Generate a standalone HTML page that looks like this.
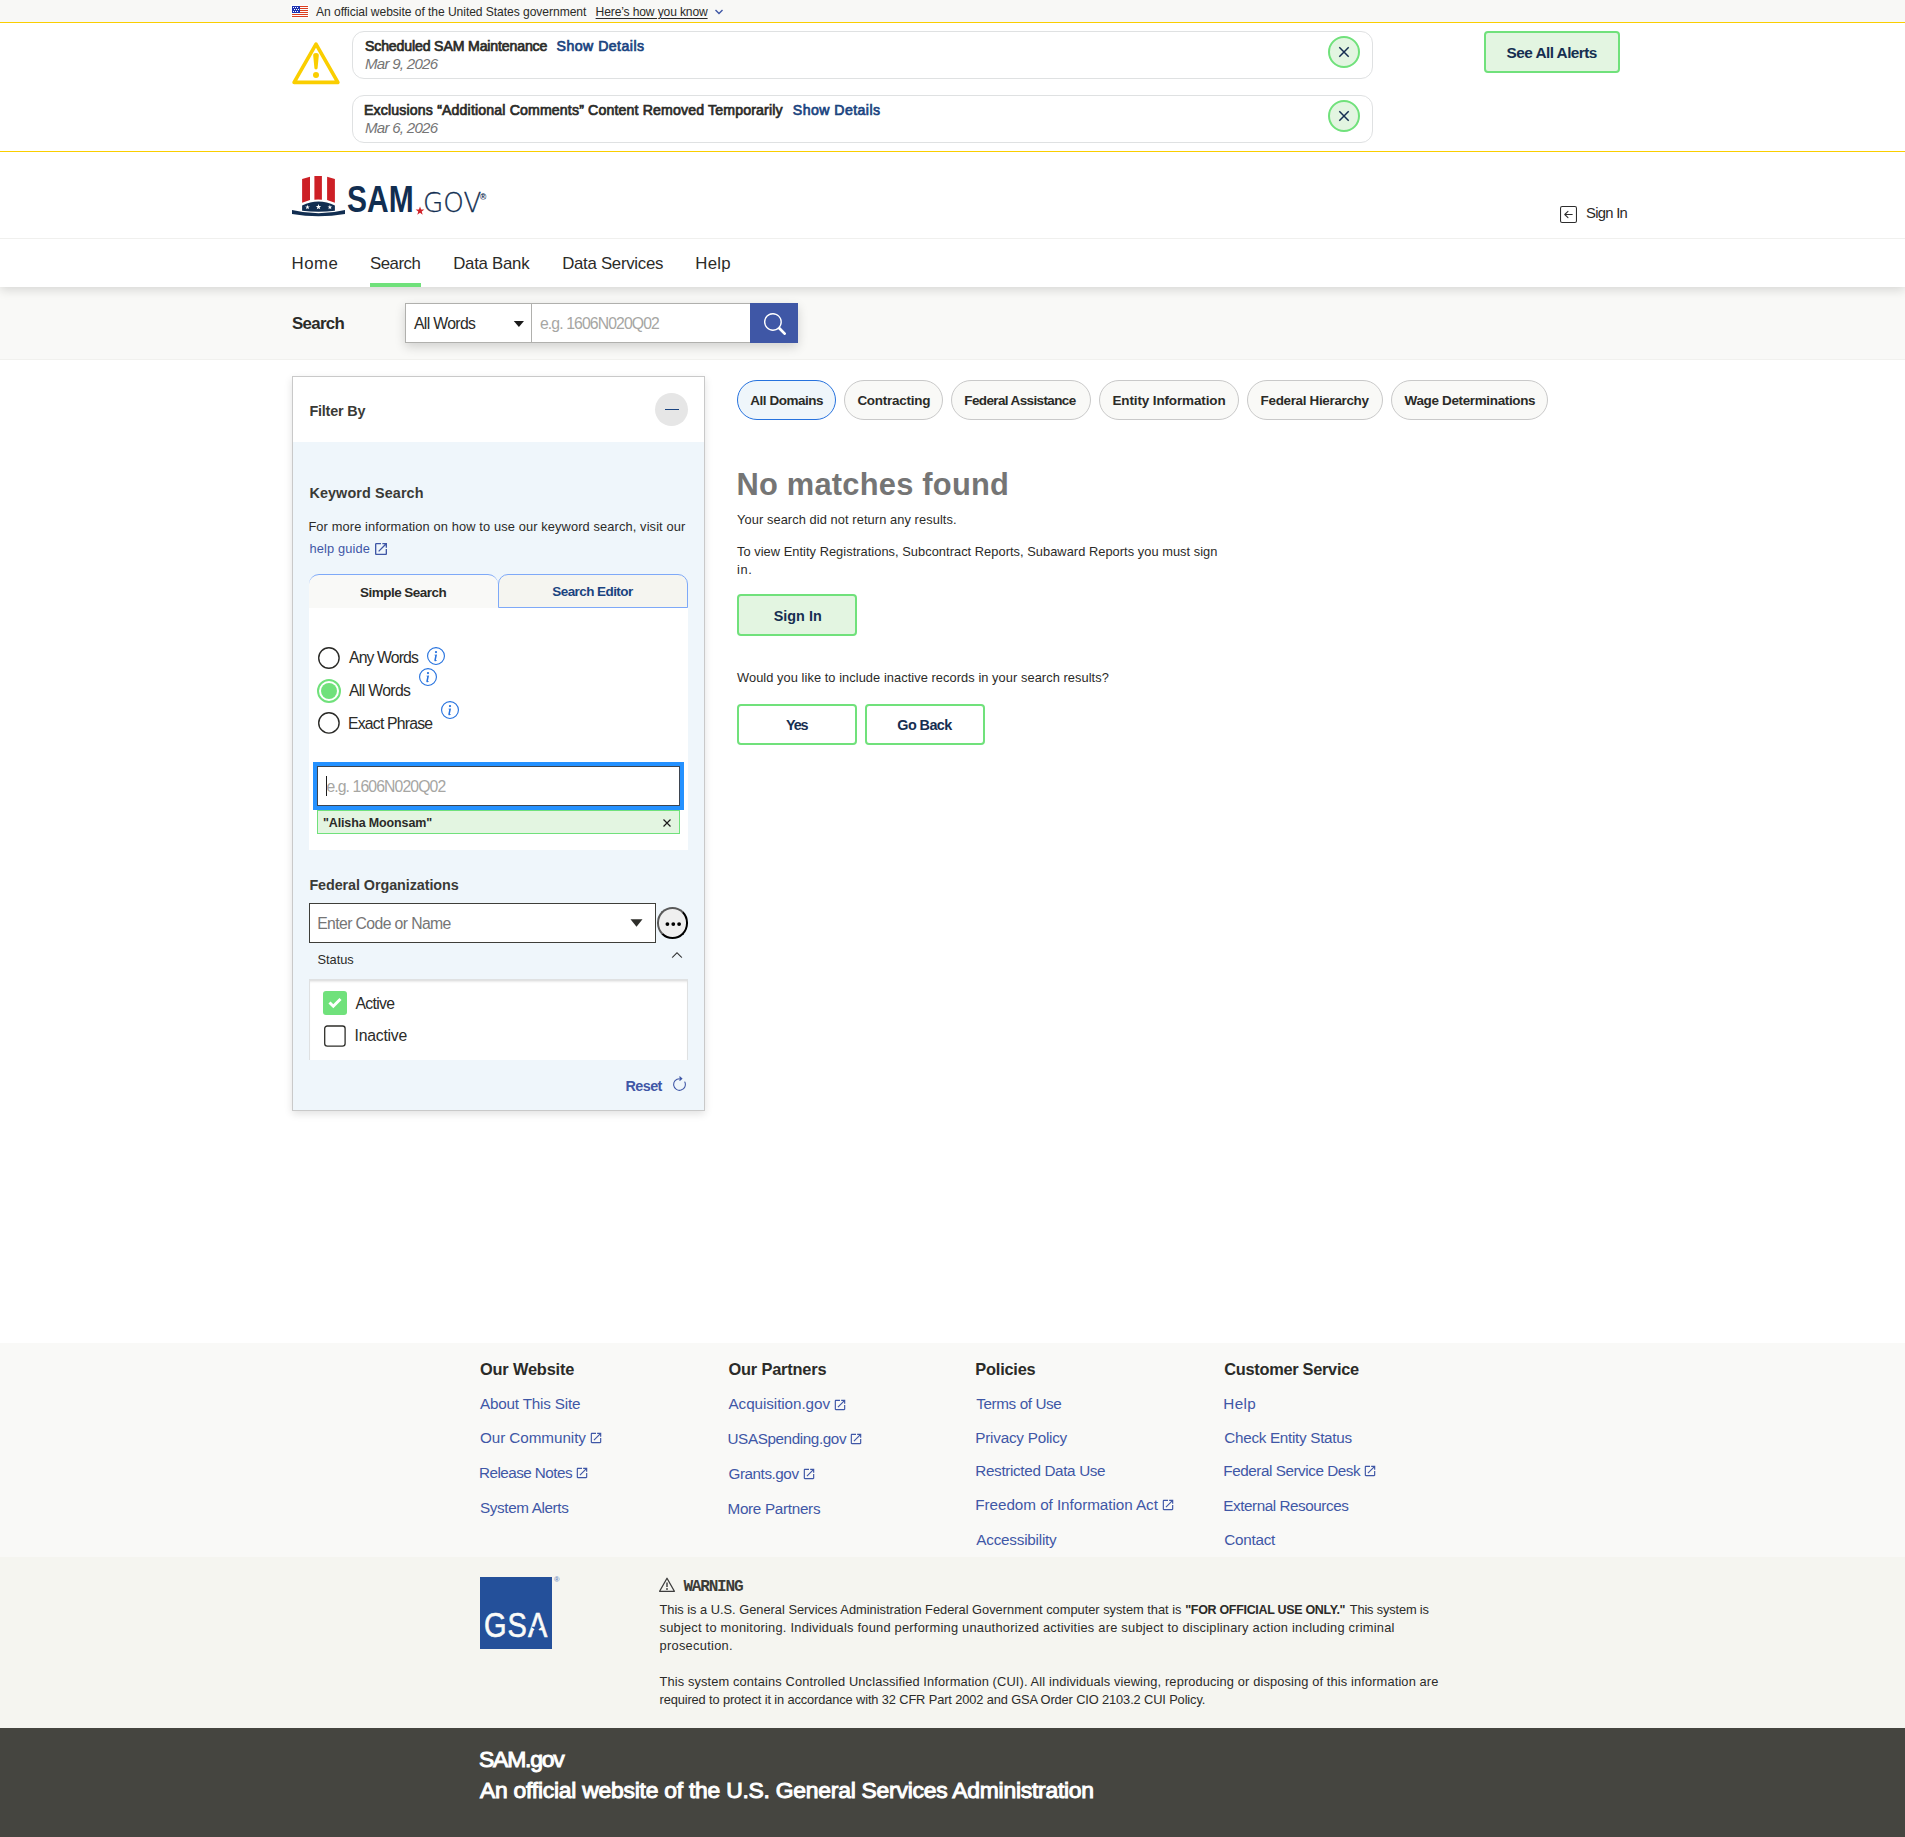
<!DOCTYPE html>
<html lang="en"><head><meta charset="utf-8"><title>SAM.gov | Search</title>
<style>
html,body{margin:0;padding:0}
body{width:1905px;height:1837px;position:relative;overflow:hidden;background:#fff;font-family:"Liberation Sans",sans-serif;-webkit-font-smoothing:antialiased}
.r{position:absolute;box-sizing:content-box;display:block}
.t{position:absolute;white-space:pre;line-height:1;margin:0;padding:0}
</style></head><body>
<!-- ===== backgrounds ===== -->
<div class="r" style="left:0;top:0;width:1905px;height:22px;background:#f8f8f6"></div>
<div class="r" style="left:0;top:22px;width:1905px;height:1px;background:#face00"></div>
<div class="r" style="left:0;top:151px;width:1905px;height:1px;background:#face00"></div>
<div class="r" style="left:0;top:238px;width:1905px;height:1px;background:#f0f0ee"></div>
<!-- search strip -->
<div class="r" style="left:0;top:287px;width:1905px;height:72px;background:#f9f9f7;border-bottom:1px solid #f1f1ee"></div>
<div class="r" style="left:0;top:239px;width:1905px;height:48px;background:#fff;box-shadow:0 3px 10px rgba(0,0,0,.14);clip-path:inset(0 0 -30px 0)"></div>
<!-- nav underline -->
<div class="r" style="left:370px;top:283px;width:51px;height:4px;background:#70e17b"></div>

<!-- ===== gov banner ===== -->
<svg class="r" style="left:291px;top:5px" width="18" height="13" viewBox="-1 -1 18 13" shape-rendering="crispEdges">
<rect x="-1" y="-1" width="18" height="13" fill="#fdfdfd"/>
<g fill="#db3e1f"><rect y="0" width="16" height="1"/><rect y="2" width="16" height="1"/><rect y="4" width="16" height="1"/><rect y="6" width="16" height="1"/><rect y="8" width="16" height="1"/><rect y="10" width="16" height="1"/></g>
<rect width="8" height="7" fill="#1e33b1"/>
<g fill="#fff"><rect x="1" y="1" width="1" height="1"/><rect x="3" y="1" width="1" height="1"/><rect x="5" y="1" width="1" height="1"/><rect x="2" y="3" width="1" height="1"/><rect x="4" y="3" width="1" height="1"/><rect x="6" y="3" width="1" height="1"/><rect x="1" y="5" width="1" height="1"/><rect x="3" y="5" width="1" height="1"/><rect x="5" y="5" width="1" height="1"/></g>
</svg>
<svg class="r" style="left:714px;top:8px" width="10" height="8" viewBox="0 0 10 8"><path d="M1.5 2 L5 5.5 L8.5 2" fill="none" stroke="#3f57a6" stroke-width="1.4"/></svg>

<!-- ===== alerts ===== -->
<svg class="r" style="left:288px;top:38px" width="56" height="50" viewBox="288 38 56 50">
<path d="M316 44.1 L337.9 82.4 L294.1 82.4 Z" fill="none" stroke="#face00" stroke-width="3.6" stroke-linejoin="round"/>
<path d="M313.2 55.5 a2.8 2.4 0 0 1 5.6 0 L317.6 68 a1.6 1.4 0 0 1 -3.2 0 Z" fill="#face00"/>
<circle cx="316" cy="75" r="3" fill="#face00"/>
</svg>
<div class="r" style="left:352px;top:31px;width:1019px;height:46px;border:1px solid #dfe1e2;border-radius:12px;background:#fff"></div>
<div class="r" style="left:352px;top:95px;width:1019px;height:46px;border:1px solid #dfe1e2;border-radius:12px;background:#fff"></div>
<div class="r" style="left:1328px;top:36px;width:28px;height:28px;border:2px solid #70e17b;border-radius:50%;background:#e3f5e1"></div>
<div class="r" style="left:1328px;top:100px;width:28px;height:28px;border:2px solid #70e17b;border-radius:50%;background:#e3f5e1"></div>
<svg class="r" style="left:1336px;top:44px" width="16" height="16" viewBox="0 0 16 16"><path d="M3.3 3.3 L12.7 12.7 M12.7 3.3 L3.3 12.7" stroke="#162e51" stroke-width="1.5" fill="none"/></svg>
<svg class="r" style="left:1336px;top:108px" width="16" height="16" viewBox="0 0 16 16"><path d="M3.3 3.3 L12.7 12.7 M12.7 3.3 L3.3 12.7" stroke="#162e51" stroke-width="1.5" fill="none"/></svg>
<div class="r" style="left:1484px;top:31px;width:132px;height:38px;border:2px solid #70e17b;border-radius:4px;background:#e3f5e1"></div>

<!-- ===== header: logo ===== -->
<svg class="r" style="left:290px;top:174px" width="60" height="44" viewBox="290 174 60 44">
<path d="M302.1 179 L310 176.8 L310 200 L302.1 202.7 Z" fill="#cd2026"/>
<path d="M314.4 176 L321.9 176 L321.9 199.7 Q318.2 199.3 314.4 199.7 Z" fill="#cd2026"/>
<path d="M327.1 176.8 L334.9 179 L334.9 202.7 L327.1 200 Z" fill="#cd2026"/>
<path d="M302.1 205.6 Q318.5 197.4 334.9 205.6 L334.9 210.8 Q318.5 212.6 302.1 210.8 Z" fill="#112e51"/>
<path d="M292 209.9 Q318.5 216.4 345 209.9 L345 214 Q318.5 218.6 292 214 Z" fill="#112e51"/>
<g fill="#fff"><path d="M0 -2.9 L0.68 -0.9 L2.76 -0.9 L1.1 0.34 L1.7 2.35 L0 1.15 L-1.7 2.35 L-1.1 0.34 L-2.76 -0.9 L-0.68 -0.9 Z" transform="translate(307.5 207.2) scale(.85)"/><path d="M0 -2.9 L0.68 -0.9 L2.76 -0.9 L1.1 0.34 L1.7 2.35 L0 1.15 L-1.7 2.35 L-1.1 0.34 L-2.76 -0.9 L-0.68 -0.9 Z" transform="translate(318.5 207)"/><path d="M0 -2.9 L0.68 -0.9 L2.76 -0.9 L1.1 0.34 L1.7 2.35 L0 1.15 L-1.7 2.35 L-1.1 0.34 L-2.76 -0.9 L-0.68 -0.9 Z" transform="translate(329.9 207.2) scale(.85)"/></g>
</svg>
<svg class="r" style="left:414px;top:205px" width="12" height="12" viewBox="-6 -6 12 12"><path d="M0 -4.6 L1.1 -1.45 L4.4 -1.4 L1.75 0.6 L2.7 3.75 L0 1.85 L-2.7 3.75 L-1.75 0.6 L-4.4 -1.4 L-1.1 -1.45 Z" fill="#d12229"/></svg>
<svg class="r" style="left:1560px;top:206px" width="17" height="17" viewBox="0 0 16 16"><path fill="#2d2d2d" fill-rule="evenodd" d="M15 2a1 1 0 0 0-1-1H2a1 1 0 0 0-1 1v12a1 1 0 0 0 1 1h12a1 1 0 0 0 1-1V2zM0 2a2 2 0 0 1 2-2h12a2 2 0 0 1 2 2v12a2 2 0 0 1-2 2H2a2 2 0 0 1-2-2V2zm11.5 5.5a.5.5 0 0 1 0 1H5.707l2.147 2.146a.5.5 0 0 1-.708.708l-3-3a.5.5 0 0 1 0-.708l3-3a.5.5 0 1 1 .708.708L5.707 7.5H11.5z"/></svg>

<!-- ===== search group ===== -->
<div class="r" style="left:405px;top:303px;width:393px;height:40px;box-shadow:0 4px 10px rgba(0,0,0,.16)"></div>
<div class="r" style="left:405px;top:303px;width:125px;height:38px;border:1px solid #b0b0ad;border-right:none;background:#fff"></div>
<div class="r" style="left:531px;top:303px;width:218px;height:38px;border:1px solid #b0b0ad;border-right:none;background:#fff"></div>
<div class="r" style="left:750px;top:303px;width:48px;height:40px;background:#3f57a6"></div>
<svg class="r" style="left:513px;top:320px" width="12" height="8" viewBox="0 0 12 8"><path d="M0.8 1 L11 1 L5.9 7 Z" fill="#1b1b1b"/></svg>
<svg class="r" style="left:763.7px;top:312.5px" width="22" height="22" viewBox="0 0 16 16"><path fill="#fff" d="M11.742 10.344a6.5 6.5 0 1 0-1.397 1.398h-.001c.03.04.062.078.098.115l3.85 3.85a1 1 0 0 0 1.415-1.414l-3.85-3.85a1.007 1.007 0 0 0-.115-.1zM12 6.5a5.5 5.5 0 1 1-11 0 5.5 5.5 0 0 1 11 0z"/></svg>

<!-- ===== filter panel ===== -->
<div class="r" style="left:292px;top:376px;width:411px;height:733px;border:1px solid #c9c9c9;background:#eff6fb;box-shadow:0 3px 8px rgba(0,0,0,.12)"></div>
<div class="r" style="left:293px;top:377px;width:411px;height:65px;background:#fff"></div>
<div class="r" style="left:655px;top:393px;width:33px;height:33px;border-radius:50%;background:#e6e6e6"></div>
<div class="r" style="left:664.5px;top:408.5px;width:14.5px;height:1.5px;background:#1a4480"></div>
<!-- ext icon help guide -->
<svg class="r" style="left:373px;top:541px" width="16" height="16" viewBox="0 0 24 24"><path fill="#3f57a6" d="M19 19H5V5h7V3H5c-1.11 0-2 .9-2 2v14c0 1.1.89 2 2 2h14c1.1 0 2-.9 2-2v-7h-2v7zM14 3v2h3.590l-9.830 9.830 1.410 1.410L19 6.410V10h2V3h-7z"/></svg>
<!-- tabs -->
<div class="r" style="left:309px;top:574px;width:189px;height:33px;border:0 solid #7ea9f8;border-top-width:1px;border-radius:10px 10px 0 0;background:#f9f9f7"></div>
<div class="r" style="left:498px;top:574px;width:188px;height:32px;border:1px solid #7ea9f8;border-radius:10px 10px 0 0;background:#f5f5f0"></div>
<div class="r" style="left:309px;top:608px;width:379px;height:242px;background:#fff"></div>
<!-- radios -->
<svg class="r" style="left:316px;top:645px" width="26" height="26" viewBox="0 0 26 26"><circle cx="12.9" cy="13" r="10.2" fill="#fff" stroke="#2a2a27" stroke-width="1.4"/></svg>
<div class="r" style="left:317px;top:679px;width:20px;height:20px;border:2px solid #70e17b;border-radius:50%;background:#fff"></div>
<div class="r" style="left:321px;top:683px;width:16px;height:16px;border-radius:50%;background:#70e17b"></div>
<svg class="r" style="left:316px;top:710px" width="26" height="26" viewBox="0 0 26 26"><circle cx="12.9" cy="12.9" r="10.2" fill="#fff" stroke="#2a2a27" stroke-width="1.4"/></svg>
<!-- info icons -->
<svg class="r" style="left:427.2px;top:647px" width="18" height="18" viewBox="0 0 16 16" fill="#2672de"><path d="M8 15A7 7 0 1 1 8 1a7 7 0 0 1 0 14zm0 1A8 8 0 1 0 8 0a8 8 0 0 0 0 16z"/><path d="m8.930 6.588-2.290.287-.082.380.450.083c.294.070.352.176.288.469l-.738 3.468c-.194.897.105 1.319.808 1.319.545 0 1.178-.252 1.465-.598l.088-.416c-.200.176-.492.246-.686.246-.275 0-.375-.193-.304-.533L8.930 6.588zM9 4.500a1 1 0 1 1-2 0 1 1 0 0 1 2 0z"/></svg>
<svg class="r" style="left:419.2px;top:668px" width="18" height="18" viewBox="0 0 16 16" fill="#2672de"><path d="M8 15A7 7 0 1 1 8 1a7 7 0 0 1 0 14zm0 1A8 8 0 1 0 8 0a8 8 0 0 0 0 16z"/><path d="m8.930 6.588-2.290.287-.082.380.450.083c.294.070.352.176.288.469l-.738 3.468c-.194.897.105 1.319.808 1.319.545 0 1.178-.252 1.465-.598l.088-.416c-.200.176-.492.246-.686.246-.275 0-.375-.193-.304-.533L8.930 6.588zM9 4.500a1 1 0 1 1-2 0 1 1 0 0 1 2 0z"/></svg>
<svg class="r" style="left:441.3px;top:701px" width="18" height="18" viewBox="0 0 16 16" fill="#2672de"><path d="M8 15A7 7 0 1 1 8 1a7 7 0 0 1 0 14zm0 1A8 8 0 1 0 8 0a8 8 0 0 0 0 16z"/><path d="m8.930 6.588-2.290.287-.082.380.450.083c.294.070.352.176.288.469l-.738 3.468c-.194.897.105 1.319.808 1.319.545 0 1.178-.252 1.465-.598l.088-.416c-.200.176-.492.246-.686.246-.275 0-.375-.193-.304-.533L8.930 6.588zM9 4.500a1 1 0 1 1-2 0 1 1 0 0 1 2 0z"/></svg>
<!-- focused input -->
<div class="r" style="left:313px;top:762px;width:371px;height:48px;background:#2491ff"></div>
<div class="r" style="left:317px;top:766px;width:361px;height:38px;border:1px solid #3d4551;background:#fff"></div>
<div class="r" style="left:326px;top:776px;width:1px;height:20px;background:#1b1b1b"></div>
<!-- chip -->
<div class="r" style="left:317px;top:810px;width:361px;height:21.5px;border:1px solid #70e17b;background:#e3f5e1"></div>
<svg class="r" style="left:662px;top:818px" width="10" height="10" viewBox="0 0 10 10"><path d="M1.5 1.5 L8.5 8.5 M8.5 1.5 L1.5 8.5" stroke="#1b1b1b" stroke-width="1.2" fill="none"/></svg>
<!-- fed org -->
<div class="r" style="left:309px;top:903px;width:345px;height:38px;border:1px solid #3e3e39;background:#fff"></div>
<svg class="r" style="left:629.5px;top:919px" width="13" height="9" viewBox="0 0 13 9"><path d="M0.5 0.3 L12.5 0.3 L6.5 7.8 Z" fill="#2e2e2a"/></svg>
<div class="r" style="left:656.5px;top:907px;width:27.5px;height:28px;border:2px solid;border-color:#5a5a5a #000 #000 #5a5a5a;border-radius:50%;background:#efefef"></div>
<svg class="r" style="left:663px;top:919px" width="20" height="10" viewBox="0 0 20 10"><circle cx="4.4" cy="5.1" r="1.9" fill="#000"/><circle cx="10.3" cy="5.1" r="1.9" fill="#000"/><circle cx="16.1" cy="5.1" r="1.9" fill="#000"/></svg>
<!-- status -->
<svg class="r" style="left:670.6px;top:949.1px" width="12" height="12" viewBox="0 0 16 16"><path fill="#1b1b1b" stroke="#1b1b1b" stroke-width=".4" fill-rule="evenodd" d="M7.646 4.646a.5.5 0 0 1 .708 0l6 6a.5.5 0 0 1-.708.708L8 5.707l-5.646 5.647a.5.5 0 0 1-.708-.708l6-6z"/></svg>
<div class="r" style="left:309px;top:979px;width:377px;height:80px;border:1px solid #dfe1e2;border-bottom:none;background:#fff;box-shadow:inset 0 3px 3px -2px rgba(0,0,0,.18)"></div>
<div class="r" style="left:323px;top:991px;width:24px;height:24px;border-radius:3px;background:#70e17b"></div>
<svg class="r" style="left:323px;top:991px" width="24" height="24" viewBox="0 0 24 24"><path d="M6.5 11.5 L10.3 15.2 L17.5 8" stroke="#fff" stroke-width="3" fill="none"/></svg>
<svg class="r" style="left:322px;top:1023px" width="26" height="26" viewBox="0 0 26 26"><rect x="2.7" y="3" width="20.4" height="20.1" rx="2.6" fill="#fff" stroke="#2e2e2a" stroke-width="1.3"/></svg>
<svg class="r" style="left:670.9px;top:1076.3px" width="17" height="17" viewBox="0 0 16 16" fill="#3f57a6"><path fill-rule="evenodd" d="M8 3a5 5 0 1 0 4.546 2.914.5.5 0 0 1 .908-.417A6 6 0 1 1 8 2v1z"/><path d="M8 4.466V.534a.25.25 0 0 1 .41-.192l2.36 1.966c.12.1.12.284 0 .384L8.410 4.658A.25.25 0 0 1 8 4.466z"/></svg>

<!-- ===== pills ===== -->
<div class="r" style="left:737px;top:380px;width:97px;height:38px;border:1px solid #2672de;border-radius:20px;background:#eff6fb"></div>
<div class="r" style="left:844px;top:380px;width:97px;height:38px;border:1px solid #c9c9c9;border-radius:20px;background:#f9f9f7"></div>
<div class="r" style="left:951px;top:380px;width:138px;height:38px;border:1px solid #c9c9c9;border-radius:20px;background:#f9f9f7"></div>
<div class="r" style="left:1099px;top:380px;width:138px;height:38px;border:1px solid #c9c9c9;border-radius:20px;background:#f9f9f7"></div>
<div class="r" style="left:1247px;top:380px;width:134px;height:38px;border:1px solid #c9c9c9;border-radius:20px;background:#f9f9f7"></div>
<div class="r" style="left:1391px;top:380px;width:155px;height:38px;border:1px solid #c9c9c9;border-radius:20px;background:#f9f9f7"></div>
<!-- buttons -->
<div class="r" style="left:737px;top:594px;width:116px;height:38px;border:2px solid #70e17b;border-radius:4px;background:#e3f5e1"></div>
<div class="r" style="left:737px;top:704px;width:116px;height:37px;border:2px solid #70e17b;border-radius:4px;background:#fff"></div>
<div class="r" style="left:865px;top:704px;width:116px;height:37px;border:2px solid #70e17b;border-radius:4px;background:#fff"></div>

<!-- ===== footer ===== -->
<div class="r" style="left:0;top:1343px;width:1905px;height:214px;background:#f9f9f7"></div>
<div class="r" style="left:0;top:1557px;width:1905px;height:171px;background:#f5f5f0"></div>
<div class="r" style="left:0;top:1728px;width:1905px;height:109px;background:#454540"></div>
<div class="r" style="left:480px;top:1577px;width:72px;height:72px;background:#24509a"></div>
<svg class="r" style="left:658px;top:1576px" width="18" height="17" viewBox="0 0 18 17"><path d="M9 2.2 L16.4 15.3 L1.6 15.3 Z" fill="none" stroke="#3d3d3d" stroke-width="1.3" stroke-linejoin="round"/><path d="M9 6.6 L9 11" stroke="#3d3d3d" stroke-width="1.4"/><circle cx="9" cy="13" r="0.9" fill="#3d3d3d"/></svg>
<!-- footer ext icons -->
<svg class="r" style="left:588.5px;top:1431.2px" width="14" height="14" viewBox="0 0 24 24"><path fill="#3f57a6" d="M19 19H5V5h7V3H5c-1.11 0-2 .9-2 2v14c0 1.1.89 2 2 2h14c1.1 0 2-.9 2-2v-7h-2v7zM14 3v2h3.590l-9.830 9.830 1.410 1.410L19 6.410V10h2V3h-7z"/></svg>
<svg class="r" style="left:574.5px;top:1466.0px" width="14" height="14" viewBox="0 0 24 24"><path fill="#3f57a6" d="M19 19H5V5h7V3H5c-1.11 0-2 .9-2 2v14c0 1.1.89 2 2 2h14c1.1 0 2-.9 2-2v-7h-2v7zM14 3v2h3.590l-9.830 9.830 1.410 1.410L19 6.410V10h2V3h-7z"/></svg>
<svg class="r" style="left:832.5px;top:1397.5px" width="14" height="14" viewBox="0 0 24 24"><path fill="#3f57a6" d="M19 19H5V5h7V3H5c-1.11 0-2 .9-2 2v14c0 1.1.89 2 2 2h14c1.1 0 2-.9 2-2v-7h-2v7zM14 3v2h3.590l-9.830 9.830 1.410 1.410L19 6.410V10h2V3h-7z"/></svg>
<svg class="r" style="left:848.9px;top:1432.4px" width="14" height="14" viewBox="0 0 24 24"><path fill="#3f57a6" d="M19 19H5V5h7V3H5c-1.11 0-2 .9-2 2v14c0 1.1.89 2 2 2h14c1.1 0 2-.9 2-2v-7h-2v7zM14 3v2h3.590l-9.830 9.830 1.410 1.410L19 6.410V10h2V3h-7z"/></svg>
<svg class="r" style="left:801.5px;top:1467.2px" width="14" height="14" viewBox="0 0 24 24"><path fill="#3f57a6" d="M19 19H5V5h7V3H5c-1.11 0-2 .9-2 2v14c0 1.1.89 2 2 2h14c1.1 0 2-.9 2-2v-7h-2v7zM14 3v2h3.590l-9.830 9.830 1.410 1.410L19 6.410V10h2V3h-7z"/></svg>
<svg class="r" style="left:1161.2px;top:1498.2px" width="14" height="14" viewBox="0 0 24 24"><path fill="#3f57a6" d="M19 19H5V5h7V3H5c-1.11 0-2 .9-2 2v14c0 1.1.89 2 2 2h14c1.1 0 2-.9 2-2v-7h-2v7zM14 3v2h3.590l-9.830 9.830 1.410 1.410L19 6.410V10h2V3h-7z"/></svg>
<svg class="r" style="left:1363.0px;top:1464.0px" width="14" height="14" viewBox="0 0 24 24"><path fill="#3f57a6" d="M19 19H5V5h7V3H5c-1.11 0-2 .9-2 2v14c0 1.1.89 2 2 2h14c1.1 0 2-.9 2-2v-7h-2v7zM14 3v2h3.590l-9.830 9.830 1.410 1.410L19 6.410V10h2V3h-7z"/></svg>

<!-- ===== text ===== -->
<span class="t" id="t0" style="left:316.00px;top:5.6px;font-size:12.09px;font-weight:400;color:#2b2b28;letter-spacing:-0.054px;">An official website of the United States government</span>
<span class="t" id="t1" style="left:595.60px;top:5.6px;font-size:12.09px;font-weight:400;color:#2b2b28;letter-spacing:-0.136px;text-decoration:underline;text-underline-offset:2px">Here&rsquo;s how you know</span>
<span class="t" id="t2" style="left:365.00px;top:39.1px;font-size:14.14px;font-weight:400;color:#2b2b28;letter-spacing:-0.156px;-webkit-text-stroke:.7px #2b2b28">Scheduled SAM Maintenance</span>
<span class="t" id="t3" style="left:556.60px;top:39.1px;font-size:14.14px;font-weight:400;color:#1a4480;letter-spacing:0.457px;-webkit-text-stroke:.7px #1a4480">Show Details</span>
<span class="t" id="t4" style="left:365.00px;top:55.6px;font-size:15.07px;font-weight:400;color:#757575;letter-spacing:-0.730px;font-style:italic">Mar 9, 2026</span>
<span class="t" id="t5" style="left:364.00px;top:103.1px;font-size:14.14px;font-weight:400;color:#2b2b28;letter-spacing:0.154px;-webkit-text-stroke:.7px #2b2b28">Exclusions &ldquo;Additional Comments&rdquo; Content Removed Temporarily</span>
<span class="t" id="t6" style="left:792.80px;top:103.1px;font-size:14.14px;font-weight:400;color:#1a4480;letter-spacing:0.439px;-webkit-text-stroke:.7px #1a4480">Show Details</span>
<span class="t" id="t7" style="left:365.00px;top:119.8px;font-size:15.07px;font-weight:400;color:#757575;letter-spacing:-0.730px;font-style:italic">Mar 6, 2026</span>
<span class="t" id="t8" style="left:1506.60px;top:44.8px;font-size:15.35px;font-weight:700;color:#162e51;letter-spacing:-0.538px;">See All Alerts</span>
<span class="t" id="t9" style="left:1586.00px;top:205.7px;font-size:14.79px;font-weight:400;color:#2b2b28;letter-spacing:-0.700px;">Sign In</span>
<span class="t" id="t10" style="left:291.60px;top:256.1px;font-size:16.81px;font-weight:400;color:#2b2b28;letter-spacing:0.512px;">Home</span>
<span class="t" id="t11" style="left:370.00px;top:256.1px;font-size:16.81px;font-weight:400;color:#2b2b28;letter-spacing:-0.476px;">Search</span>
<span class="t" id="t12" style="left:453.20px;top:256.1px;font-size:16.81px;font-weight:400;color:#2b2b28;letter-spacing:-0.254px;">Data Bank</span>
<span class="t" id="t13" style="left:562.20px;top:256.1px;font-size:16.81px;font-weight:400;color:#2b2b28;letter-spacing:-0.280px;">Data Services</span>
<span class="t" id="t14" style="left:695.30px;top:256.1px;font-size:16.81px;font-weight:400;color:#2b2b28;letter-spacing:0.265px;">Help</span>
<span class="t" id="t15" style="left:292.00px;top:315.8px;font-size:16.83px;font-weight:700;color:#2b2b28;letter-spacing:-0.670px;">Search</span>
<span class="t" id="t16" style="left:414.00px;top:315.8px;font-size:15.77px;font-weight:400;color:#2b2b28;letter-spacing:-0.660px;">All Words</span>
<span class="t" id="t17" style="left:540.00px;top:315.8px;font-size:15.77px;font-weight:400;color:#a6a6a3;letter-spacing:-0.898px;">e.g. 1606N020Q02</span>
<span class="t" id="t18" style="left:309.40px;top:403.8px;font-size:14.39px;font-weight:700;color:#3a3a36;letter-spacing:-0.190px;">Filter By</span>
<span class="t" id="t19" style="left:309.40px;top:485.9px;font-size:14.39px;font-weight:700;color:#3a3a36;letter-spacing:0.110px;">Keyword Search</span>
<span class="t" id="t20" style="left:308.40px;top:520.5px;font-size:12.83px;font-weight:400;color:#2b2b28;letter-spacing:0.120px;">For more information on how to use our keyword search, visit our</span>
<span class="t" id="t21" style="left:309.40px;top:542.5px;font-size:12.83px;font-weight:400;color:#3f57a6;letter-spacing:0.148px;">help guide</span>
<span class="t" id="t22" style="left:360.00px;top:585.6px;font-size:13.48px;font-weight:700;color:#2b2b28;letter-spacing:-0.508px;">Simple Search</span>
<span class="t" id="t23" style="left:552.30px;top:585.0px;font-size:13.48px;font-weight:700;color:#1a4480;letter-spacing:-0.561px;">Search Editor</span>
<span class="t" id="t24" style="left:349.00px;top:649.8px;font-size:15.77px;font-weight:400;color:#2b2b28;letter-spacing:-0.866px;">Any Words</span>
<span class="t" id="t25" style="left:349.00px;top:682.9px;font-size:15.77px;font-weight:400;color:#2b2b28;letter-spacing:-0.660px;">All Words</span>
<span class="t" id="t26" style="left:348.00px;top:716.0px;font-size:15.77px;font-weight:400;color:#2b2b28;letter-spacing:-0.790px;">Exact Phrase</span>
<span class="t" id="t27" style="left:326.40px;top:779.2px;font-size:15.77px;font-weight:400;color:#a6a6a3;letter-spacing:-0.898px;">e.g. 1606N020Q02</span>
<span class="t" id="t28" style="left:323.00px;top:817.0px;font-size:12.49px;font-weight:700;color:#2b2b28;letter-spacing:-0.128px;">&quot;Alisha Moonsam&quot;</span>
<span class="t" id="t29" style="left:309.40px;top:877.7px;font-size:14.39px;font-weight:700;color:#3a3a36;letter-spacing:-0.084px;">Federal Organizations</span>
<span class="t" id="t30" style="left:317.20px;top:915.7px;font-size:15.77px;font-weight:400;color:#757575;letter-spacing:-0.613px;">Enter Code or Name</span>
<span class="t" id="t31" style="left:317.60px;top:954.0px;font-size:12.83px;font-weight:400;color:#2b2b28;letter-spacing:-0.051px;">Status</span>
<span class="t" id="t32" style="left:355.50px;top:995.7px;font-size:15.77px;font-weight:400;color:#2b2b28;letter-spacing:-0.693px;">Active</span>
<span class="t" id="t33" style="left:354.50px;top:1028.0px;font-size:15.77px;font-weight:400;color:#2b2b28;letter-spacing:-0.224px;">Inactive</span>
<span class="t" id="t34" style="left:625.50px;top:1078.7px;font-size:14.39px;font-weight:700;color:#3f57a6;letter-spacing:-0.566px;">Reset</span>
<span class="t" id="t35" style="left:750.30px;top:394.3px;font-size:13.48px;font-weight:700;color:#2b2b28;letter-spacing:-0.464px;">All Domains</span>
<span class="t" id="t36" style="left:857.40px;top:394.3px;font-size:13.48px;font-weight:700;color:#2b2b28;letter-spacing:-0.254px;">Contracting</span>
<span class="t" id="t37" style="left:964.30px;top:394.3px;font-size:13.48px;font-weight:700;color:#2b2b28;letter-spacing:-0.611px;">Federal Assistance</span>
<span class="t" id="t38" style="left:1112.50px;top:394.3px;font-size:13.48px;font-weight:700;color:#2b2b28;letter-spacing:-0.124px;">Entity Information</span>
<span class="t" id="t39" style="left:1260.60px;top:394.3px;font-size:13.48px;font-weight:700;color:#2b2b28;letter-spacing:-0.338px;">Federal Hierarchy</span>
<span class="t" id="t40" style="left:1404.60px;top:394.3px;font-size:13.48px;font-weight:700;color:#2b2b28;letter-spacing:-0.345px;">Wage Determinations</span>
<span class="t" id="t41" style="left:736.40px;top:470.2px;font-size:30.84px;font-weight:700;color:#757575;letter-spacing:0.242px;">No matches found</span>
<span class="t" id="t42" style="left:737.00px;top:513.7px;font-size:12.83px;font-weight:400;color:#2b2b28;letter-spacing:0.086px;">Your search did not return any results.</span>
<span class="t" id="t43" style="left:737.00px;top:546.0px;font-size:12.83px;font-weight:400;color:#2b2b28;letter-spacing:0.043px;">To view Entity Registrations, Subcontract Reports, Subaward Reports you must sign</span>
<span class="t" id="t44" style="left:737.00px;top:563.7px;font-size:12.83px;font-weight:400;color:#2b2b28;letter-spacing:0.658px;">in.</span>
<span class="t" id="t45" style="left:773.70px;top:609.0px;font-size:14.39px;font-weight:700;color:#162e51;letter-spacing:0.011px;">Sign In</span>
<span class="t" id="t46" style="left:737.00px;top:671.5px;font-size:12.83px;font-weight:400;color:#2b2b28;letter-spacing:0.064px;">Would you like to include inactive records in your search results?</span>
<span class="t" id="t47" style="left:786.00px;top:718.0px;font-size:14.39px;font-weight:700;color:#162e51;letter-spacing:-1.094px;">Yes</span>
<span class="t" id="t48" style="left:897.30px;top:718.0px;font-size:14.39px;font-weight:700;color:#162e51;letter-spacing:-0.554px;">Go Back</span>
<span class="t" id="t49" style="left:480.00px;top:1360.6px;font-size:16.36px;font-weight:700;color:#2b2b28;letter-spacing:-0.176px;">Our Website</span>
<span class="t" id="t50" style="left:728.50px;top:1360.6px;font-size:16.36px;font-weight:700;color:#2b2b28;letter-spacing:-0.183px;">Our Partners</span>
<span class="t" id="t51" style="left:975.30px;top:1360.6px;font-size:16.36px;font-weight:700;color:#2b2b28;letter-spacing:-0.205px;">Policies</span>
<span class="t" id="t52" style="left:1224.30px;top:1360.6px;font-size:16.36px;font-weight:700;color:#2b2b28;letter-spacing:-0.288px;">Customer Service</span>
<span class="t" id="t53" style="left:480.00px;top:1395.7px;font-size:15.25px;font-weight:400;color:#3f57a6;letter-spacing:-0.195px;">About This Site</span>
<span class="t" id="t54" style="left:480.00px;top:1429.9px;font-size:15.25px;font-weight:400;color:#3f57a6;letter-spacing:-0.071px;">Our Community</span>
<span class="t" id="t55" style="left:479.00px;top:1464.8px;font-size:15.25px;font-weight:400;color:#3f57a6;letter-spacing:-0.542px;">Release Notes</span>
<span class="t" id="t56" style="left:480.00px;top:1500.0px;font-size:15.25px;font-weight:400;color:#3f57a6;letter-spacing:-0.370px;">System Alerts</span>
<span class="t" id="t57" style="left:728.50px;top:1396.3px;font-size:15.25px;font-weight:400;color:#3f57a6;letter-spacing:-0.075px;">Acquisition.gov</span>
<span class="t" id="t58" style="left:727.50px;top:1431.2px;font-size:15.25px;font-weight:400;color:#3f57a6;letter-spacing:-0.400px;">USASpending.gov</span>
<span class="t" id="t59" style="left:728.50px;top:1466.0px;font-size:15.25px;font-weight:400;color:#3f57a6;letter-spacing:-0.452px;">Grants.gov</span>
<span class="t" id="t60" style="left:727.50px;top:1500.7px;font-size:15.25px;font-weight:400;color:#3f57a6;letter-spacing:-0.299px;">More Partners</span>
<span class="t" id="t61" style="left:976.30px;top:1395.7px;font-size:15.25px;font-weight:400;color:#3f57a6;letter-spacing:-0.395px;">Terms of Use</span>
<span class="t" id="t62" style="left:975.30px;top:1429.9px;font-size:15.25px;font-weight:400;color:#3f57a6;letter-spacing:-0.230px;">Privacy Policy</span>
<span class="t" id="t63" style="left:975.30px;top:1462.7px;font-size:15.25px;font-weight:400;color:#3f57a6;letter-spacing:-0.343px;">Restricted Data Use</span>
<span class="t" id="t64" style="left:975.30px;top:1497.0px;font-size:15.25px;font-weight:400;color:#3f57a6;letter-spacing:-0.053px;">Freedom of Information Act</span>
<span class="t" id="t65" style="left:976.30px;top:1531.7px;font-size:15.25px;font-weight:400;color:#3f57a6;letter-spacing:-0.219px;">Accessibility</span>
<span class="t" id="t66" style="left:1223.30px;top:1395.7px;font-size:15.25px;font-weight:400;color:#3f57a6;letter-spacing:0.373px;">Help</span>
<span class="t" id="t67" style="left:1224.30px;top:1429.9px;font-size:15.25px;font-weight:400;color:#3f57a6;letter-spacing:-0.297px;">Check Entity Status</span>
<span class="t" id="t68" style="left:1223.30px;top:1462.7px;font-size:15.25px;font-weight:400;color:#3f57a6;letter-spacing:-0.445px;">Federal Service Desk</span>
<span class="t" id="t69" style="left:1223.30px;top:1498.0px;font-size:15.25px;font-weight:400;color:#3f57a6;letter-spacing:-0.444px;">External Resources</span>
<span class="t" id="t70" style="left:1224.30px;top:1531.7px;font-size:15.25px;font-weight:400;color:#3f57a6;letter-spacing:-0.270px;">Contact</span>
<span class="t" id="t71" style="left:683.40px;top:1579.2px;font-size:16.11px;font-weight:700;color:#3d3d38;letter-spacing:-1.234px;font-family:'Liberation Mono',monospace">WARNING</span>
<span class="t" id="t72" style="left:659.50px;top:1603.8px;font-size:12.83px;font-weight:400;color:#2b2b28;letter-spacing:-0.007px;">This is a U.S. General Services Administration Federal Government computer system that is</span>
<span class="t" id="t73" style="left:1185.20px;top:1603.8px;font-size:12.49px;font-weight:700;color:#2b2b28;letter-spacing:-0.301px;">&quot;FOR OFFICIAL USE ONLY.&quot;</span>
<span class="t" id="t74" style="left:1349.80px;top:1603.8px;font-size:12.83px;font-weight:400;color:#2b2b28;letter-spacing:-0.165px;">This system is</span>
<span class="t" id="t75" style="left:659.50px;top:1621.9px;font-size:12.83px;font-weight:400;color:#2b2b28;letter-spacing:0.238px;">subject to monitoring. Individuals found performing unauthorized activities are subject to disciplinary action including criminal</span>
<span class="t" id="t76" style="left:659.50px;top:1639.7px;font-size:12.83px;font-weight:400;color:#2b2b28;letter-spacing:0.289px;">prosecution.</span>
<span class="t" id="t77" style="left:659.50px;top:1675.7px;font-size:12.83px;font-weight:400;color:#2b2b28;letter-spacing:0.128px;">This system contains Controlled Unclassified Information (CUI). All individuals viewing, reproducing or disposing of this information are</span>
<span class="t" id="t78" style="left:659.50px;top:1693.8px;font-size:12.83px;font-weight:400;color:#2b2b28;letter-spacing:-0.123px;">required to protect it in accordance with 32 CFR Part 2002 and GSA Order CIO 2103.2 CUI Policy.</span>
<span class="t" id="t79" style="left:479.00px;top:1747.5px;font-size:22.88px;font-weight:400;color:#ffffff;letter-spacing:-1.178px;-webkit-text-stroke:1px #fff">SAM.gov</span>
<span class="t" id="t80" style="left:480.00px;top:1778.5px;font-size:22.88px;font-weight:400;color:#ffffff;letter-spacing:-0.240px;-webkit-text-stroke:1px #fff">An official website of the U.S. General Services Administration</span>
<!-- logo text -->
<span class="t" style="left:346.5px;top:181.2px;font-size:37px;font-weight:700;color:#112e51;transform-origin:0 0;transform:scaleX(.81);letter-spacing:0px">SAM</span>
<span class="t" style="left:423.2px;top:189.6px;font-size:26.5px;font-weight:400;color:#112e51;transform-origin:0 0;transform:scaleX(.987);font-family:'DejaVu Sans Light','DejaVu Sans','Liberation Sans',sans-serif;font-weight:200;-webkit-text-stroke:.3px #112e51">GOV</span>
<span class="t" style="left:480px;top:192.5px;font-size:8.5px;font-weight:700;color:#112e51">&reg;</span>
<!-- GSA -->
<span class="t" style="left:483.6px;top:1607.9px;font-size:34.5px;font-weight:400;color:#fbfbf8;transform-origin:0 0;transform:scaleX(.84);-webkit-text-stroke:.6px #fbfbf8;letter-spacing:1.2px">GSA</span>
<svg class="r" style="left:529.2px;top:1621.4px" width="15" height="15" viewBox="-7.5 -7.5 15 15"><path d="M0 -5.6 L1.32 -1.75 L5.35 -1.7 L2.12 0.7 L3.3 4.55 L0 2.25 L-3.3 4.55 L-2.12 0.7 L-5.35 -1.7 L-1.32 -1.75 Z" fill="#24509a"/></svg>
<span class="t" style="left:554px;top:1576px;font-size:7.5px;font-weight:700;color:#6f8cc0">&reg;</span>

</body></html>
